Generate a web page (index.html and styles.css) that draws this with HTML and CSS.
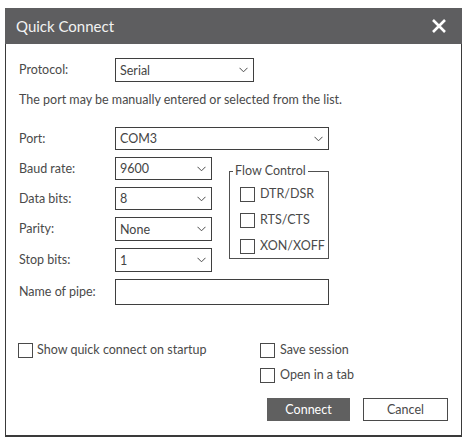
FILE: index.html
```html
<!DOCTYPE html>
<html lang="en">
  <head>
    <title>Quick Connect</title>
    <meta charset="utf-8" />
    <link rel="stylesheet" href="styles.css">
  </head>
  <body>
    <div class="dialog">
      <div class="titlebar">
        <span class="title">Quick Connect</span>
        <svg class="close" width="16" height="14" viewBox="0 0 16 14">
          <path d="M2 1 L14 13 M14 1 L2 13" stroke="#fff" stroke-width="2.6" fill="none" />
        </svg>
      </div>

      <div class="content">
        <div class="protocol-row">
          <span class="label">Protocol:</span>
          <div class="select protocol">
            <span>Serial</span>
            <svg class="chevron" width="9" height="6" viewBox="0 0 9 6"><path d="M0.5 0.8 L4.5 4.8 L8.5 0.8" /></svg>
          </div>
        </div>

        <p class="hint">The port may be manually entered or selected from the list.</p>

        <div class="serial">
          <span class="label">Port:</span>
          <div class="select wide">
            <span>COM3</span>
            <svg class="chevron" width="9" height="6" viewBox="0 0 9 6"><path d="M0.5 0.8 L4.5 4.8 L8.5 0.8" /></svg>
          </div>

          <span class="label">Baud rate:</span>
          <div class="select">
            <span>9600</span>
            <svg class="chevron" width="9" height="6" viewBox="0 0 9 6"><path d="M0.5 0.8 L4.5 4.8 L8.5 0.8" /></svg>
          </div>

          <fieldset class="flow">
            <legend>Flow Control</legend>
            <label class="check"><input type="checkbox"> DTR/DSR</label>
            <label class="check"><input type="checkbox"> RTS/CTS</label>
            <label class="check"><input type="checkbox"> XON/XOFF</label>
          </fieldset>

          <span class="label">Data bits:</span>
          <div class="select">
            <span>8</span>
            <svg class="chevron" width="9" height="6" viewBox="0 0 9 6"><path d="M0.5 0.8 L4.5 4.8 L8.5 0.8" /></svg>
          </div>

          <span class="label">Parity:</span>
          <div class="select">
            <span>None</span>
            <svg class="chevron" width="9" height="6" viewBox="0 0 9 6"><path d="M0.5 0.8 L4.5 4.8 L8.5 0.8" /></svg>
          </div>

          <span class="label">Stop bits:</span>
          <div class="select">
            <span>1</span>
            <svg class="chevron" width="9" height="6" viewBox="0 0 9 6"><path d="M0.5 0.8 L4.5 4.8 L8.5 0.8" /></svg>
          </div>

          <span class="label">Name of pipe:</span>
          <input class="pipe" type="text">
        </div>

        <div class="options">
          <label class="check startup"><input type="checkbox"> Show quick connect on startup</label>
          <label class="check"><input type="checkbox"> Save session</label>
          <span></span>
          <label class="check"><input type="checkbox"> Open in a tab</label>
        </div>

        <div class="actions">
          <button class="button primary">Connect</button>
          <button class="button">Cancel</button>
        </div>
      </div>
    </div>
  </body>
</html>
```

FILE: styles.css
```css
body {
  margin: 0;
  padding: 8px 0 0 5px;
  background-color: #ffffff;
  font-family: Lato, "Liberation Sans", sans-serif;
  font-size: 12.5px;
  color: #4a4a4a;
}

.dialog {
  width: 457px;
  box-sizing: border-box;
  border: 1px solid #3a3a3a;
  border-top: none;
  border-bottom-width: 2px;
  background-color: #ffffff;
}

.titlebar {
  display: flex;
  align-items: center;
  justify-content: space-between;
  height: 36px;
  margin: 0 -1px;
  padding: 0 15px 0 11px;
  background-color: #5e5e60;
}

.title {
  color: #f2f2f2;
  font-size: 15px;
}

.content {
  padding: 14px 13px 14px 13px;
}

.label {
  display: flex;
  align-items: center;
  line-height: 16px;
}

.protocol-row {
  display: grid;
  grid-template-columns: 96px 139px;
  height: 24px;
}

.select {
  display: flex;
  align-items: center;
  justify-content: space-between;
  box-sizing: border-box;
  padding: 0 5px 0 4px;
  border: 1px solid #3f3f3f;
  background-color: #ffffff;
  color: #444444;
}

.chevron path {
  fill: none;
  stroke: #4a4a4a;
  stroke-width: 1;
}

.hint {
  margin: 10px 0 19px;
  line-height: 16px;
}

.serial {
  display: grid;
  grid-template-columns: 96px 97px 17px 100px;
  grid-template-rows: 23px 23px 23px 24px 24px 26px;
  row-gap: 7px;
}

.serial .label {
  grid-column: 1;
}

.serial .select {
  grid-column: 2;
}

.serial .wide,
.serial .pipe {
  grid-column: 2 / 5;
}

.pipe {
  box-sizing: border-box;
  height: 26px;
  margin: 0;
  border: 1px solid #3f3f3f;
  font: inherit;
}

.flow {
  grid-column: 4;
  grid-row: 2 / span 4;
  align-self: start;
  display: flex;
  flex-direction: column;
  gap: 10px;
  box-sizing: border-box;
  height: 96px;
  margin: 6px 0 0;
  padding: 7px 0 4px 10px;
  border: 1px solid #505050;
}

.flow legend {
  margin-left: -7px;
  padding: 0 2px;
  line-height: 16px;
}

.check {
  display: flex;
  align-items: center;
  gap: 5px;
  height: 16px;
  line-height: 16px;
}

.check input {
  appearance: none;
  flex: none;
  width: 15px;
  height: 15px;
  margin: 0;
  border: 1px solid #4a4a4a;
  background-color: #ffffff;
}

.options {
  display: grid;
  grid-template-columns: 241px auto;
  grid-template-rows: 16px 16px;
  row-gap: 9px;
  margin-top: 37px;
}

.startup {
  margin-left: -1px;
  gap: 4px;
}

.actions {
  display: flex;
  justify-content: flex-end;
  gap: 13px;
  margin-top: 15px;
}

.button {
  height: 23px;
  width: 85px;
  padding: 0;
  border: 1px solid #4a4a4a;
  background-color: #ffffff;
  font: inherit;
  color: #4a4a4a;
}

.button.primary {
  width: 83px;
  border-color: #606060;
  background-color: #606060;
  color: #ffffff;
}
```
